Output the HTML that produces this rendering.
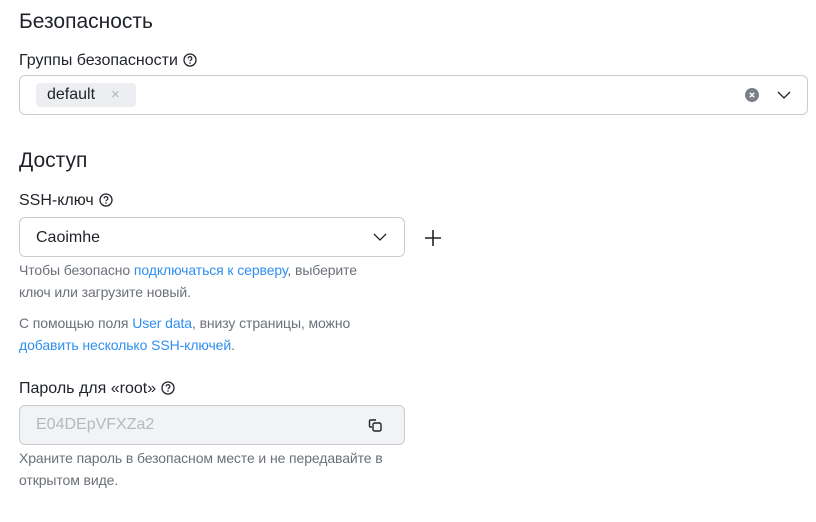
<!DOCTYPE html>
<html><head><meta charset="utf-8"><style>
body{margin:0;width:816px;height:522px;background:#fff;font-family:"Liberation Sans",sans-serif;color:#1f2329;position:relative;overflow:hidden}
.a{position:absolute;white-space:nowrap}
.h{font-size:21px}
.l{font-size:16px}
.s{font-size:14px;color:#6b7079;line-height:22px;letter-spacing:-0.1px}
.lnk{color:#2f8ff0}
.box{position:absolute;border:1px solid #c9ccd1;border-radius:6px;box-sizing:border-box}
.q{display:inline-block;vertical-align:-2px;margin-left:5px}
</style></head><body>
<div class="a h" style="left:19px;top:10px">Безопасность</div>
<div class="a l" style="left:19px;top:52px">Группы безопасности<svg class="q" width="14" height="14" viewBox="0 0 14 14"><circle cx="7" cy="7" r="6" fill="none" stroke="#1f2329" stroke-width="1.3"/><path d="M5.2 5.5a1.8 1.8 0 1 1 2.5 1.6c-.5.3-.7.6-.7 1.1" fill="none" stroke="#1f2329" stroke-width="1.2"/><circle cx="7" cy="10" r=".8" fill="#1f2329"/></svg></div>
<div class="box" style="left:19px;top:75px;width:789px;height:40px"></div>
<div class="a" style="left:36px;top:83px;width:100px;height:24px;background:#eceef1;border-radius:4px"></div>
<div class="a l" style="left:47px;top:86px">default</div>
<div class="a" style="left:111px;top:86px;color:#b0b4ba;font-size:15px">×</div>
<svg class="a" style="left:745px;top:88px" width="14" height="14"><circle cx="7" cy="7" r="7" fill="#7c8088"/><path d="M4.8 4.8l4.4 4.4M9.2 4.8l-4.4 4.4" stroke="#fff" stroke-width="1.4"/></svg>
<svg class="a" style="left:777px;top:90px" width="14" height="10"><path d="M1 2l6 6 6-6" fill="none" stroke="#1f2329" stroke-width="1.3"/></svg>
<div class="a h" style="left:19px;top:149px">Доступ</div>
<div class="a l" style="left:19px;top:192px">SSH-ключ<svg class="q" width="14" height="14" viewBox="0 0 14 14"><circle cx="7" cy="7" r="6" fill="none" stroke="#1f2329" stroke-width="1.3"/><path d="M5.2 5.5a1.8 1.8 0 1 1 2.5 1.6c-.5.3-.7.6-.7 1.1" fill="none" stroke="#1f2329" stroke-width="1.2"/><circle cx="7" cy="10" r=".8" fill="#1f2329"/></svg></div>
<div class="box" style="left:19px;top:217px;width:386px;height:40px"></div>
<div class="a l" style="left:36px;top:229px">Caoimhe</div>
<svg class="a" style="left:373px;top:232px" width="14" height="10"><path d="M1 2l6 6 6-6" fill="none" stroke="#1f2329" stroke-width="1.3"/></svg>
<svg class="a" style="left:424px;top:229px" width="18" height="18"><path d="M9 1v16M1 9h16" stroke="#1f2329" stroke-width="1.6"/></svg>
<div class="a s" style="left:19px;top:259px">Чтобы безопасно <span class="lnk">подключаться к серверу</span>, выберите<br>ключ или загрузите новый.</div>
<div class="a s" style="left:19px;top:312px">С помощью поля <span class="lnk">User data</span>, внизу страницы, можно<br><span class="lnk">добавить несколько SSH-ключей</span>.</div>
<div class="a l" style="left:19px;top:380px">Пароль для «root»<svg class="q" width="14" height="14" viewBox="0 0 14 14"><circle cx="7" cy="7" r="6" fill="none" stroke="#1f2329" stroke-width="1.3"/><path d="M5.2 5.5a1.8 1.8 0 1 1 2.5 1.6c-.5.3-.7.6-.7 1.1" fill="none" stroke="#1f2329" stroke-width="1.2"/><circle cx="7" cy="10" r=".8" fill="#1f2329"/></svg></div>
<div class="box" style="left:19px;top:405px;width:386px;height:40px;background:#f2f3f5"></div>
<div class="a l" style="left:36px;top:416px;color:#b5b9bf">E04DEpVFXZa2</div>
<svg class="a" style="left:367px;top:416px" width="18" height="18"><path d="M9 4H3.5a1 1 0 0 0-1 1v0M2.5 5v5a1 1 0 0 0 1 1H5" fill="none" stroke="#1f2329" stroke-width="1.4"/><rect x="6" y="7" width="8" height="8" rx="1.5" fill="none" stroke="#1f2329" stroke-width="1.4"/></svg>
<div class="a s" style="left:19px;top:447px">Храните пароль в безопасном месте и не передавайте в<br>открытом виде.</div>
</body></html>
